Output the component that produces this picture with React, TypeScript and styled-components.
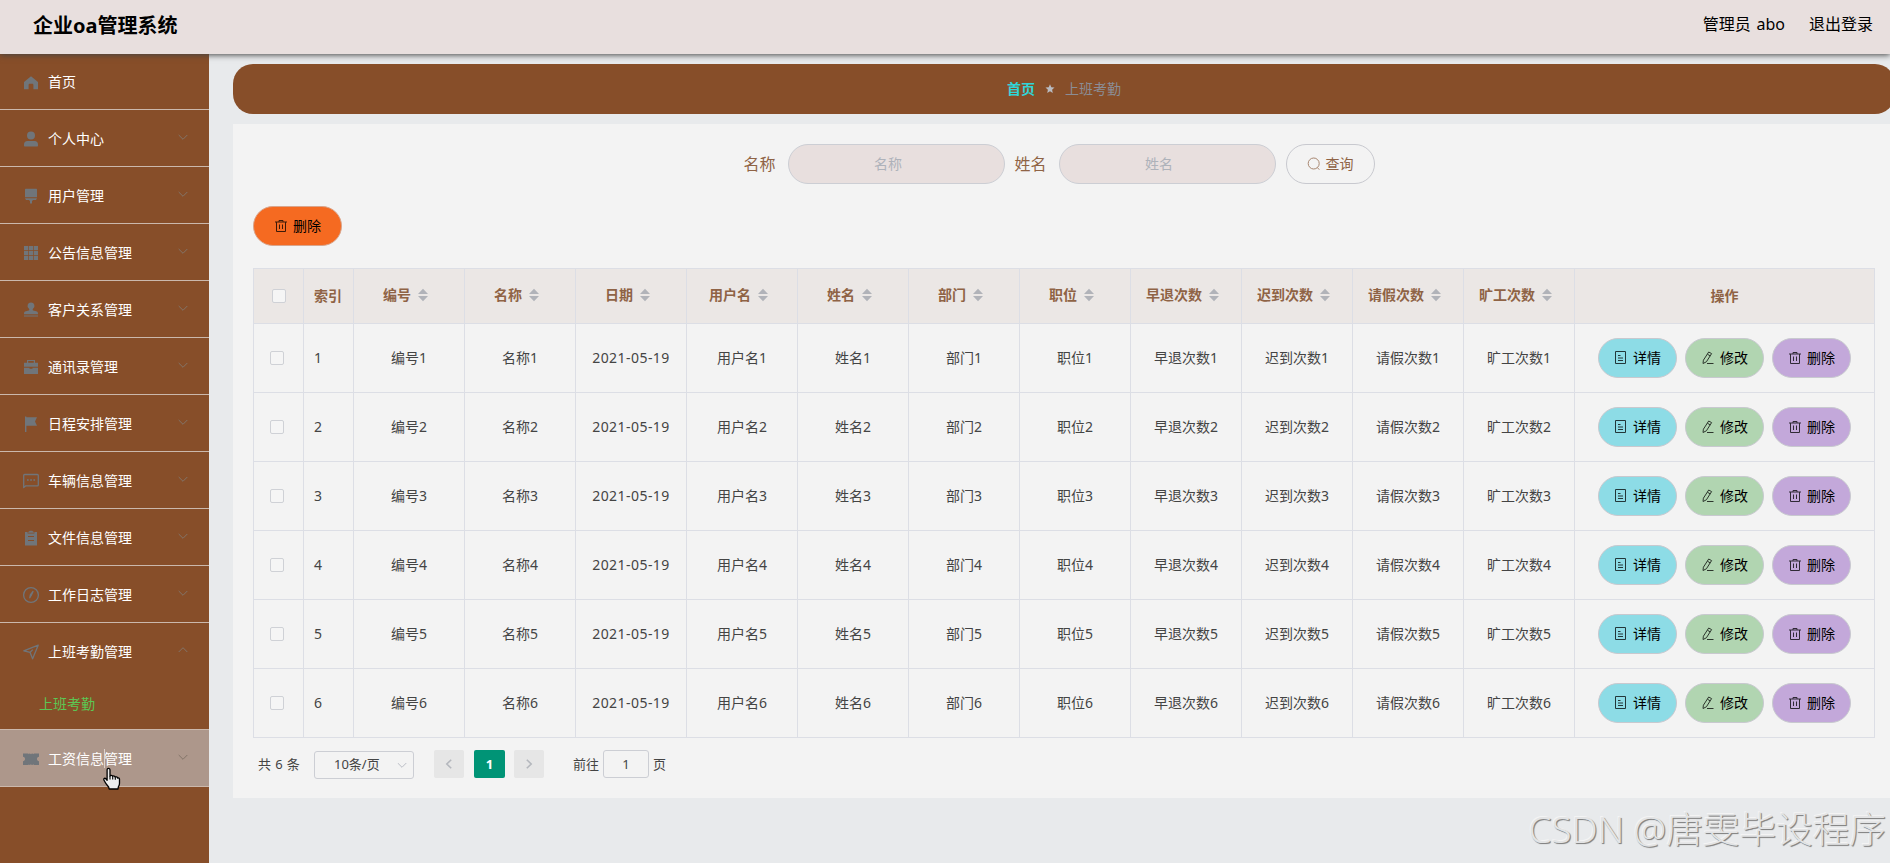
import React from 'react';
import styled, { createGlobalStyle, css } from 'styled-components';

const GlobalStyle = createGlobalStyle`
  * { box-sizing: border-box; }
  html, body { margin: 0; padding: 0; overflow: hidden; }
  body {
    font-family: "Noto Sans", "Noto Sans CJK SC", sans-serif;
    font-size: 14px;
    color: #333;
    background: #e8eaec;
  }
`;

const Page = styled.div`
  position: relative;
  display: flex;
  flex-direction: column;
  width: 1890px;
  height: 863px;
  overflow: hidden;
  background: #e8eaec;
`;

const Header = styled.header`
  position: relative;
  z-index: 2;
  flex: none;
  display: flex;
  justify-content: space-between;
  height: 54px;
  padding: 0 17px 0 33px;
  background: #e8dfde;
  color: #000;
  box-shadow: 0 1px 6px #444;
`;

const Title = styled.h1`
  margin: 0;
  font-size: 20px;
  font-weight: 700;
  line-height: 52px;
`;

const UserNav = styled.nav`
  display: flex;
  gap: 24px;
  font-size: 16px;
  line-height: 49px;
  word-spacing: 1.5px;
`;

const Body = styled.div`
  flex: 1;
  display: flex;
  min-height: 0;
`;

const Sidebar = styled.aside`
  flex: none;
  width: 209px;
  background: #874e29;
`;

const MenuItem = styled.div<{ $first?: boolean; $hover?: boolean; $open?: boolean }>`
  display: flex;
  align-items: center;
  height: ${p => (p.$first ? 56 : 57)}px;
  padding: 0 20px 0 22px;
  border-bottom: 1px solid ${p => (p.$open ? 'transparent' : '#cbb8ac')};
  background: ${p => (p.$hover ? '#ad978b' : 'transparent')};
  color: #fff;
  line-height: 20px;

  > svg:first-child { flex: none; margin-right: 8px; margin-top: ${p => (p.$first ? 3 : 2)}px; color: #70757a; }
  > span { flex: 1; padding-top: ${p => (p.$first ? 0 : 2)}px; }
  > svg:last-child { margin-top: -2px; color: #837468; }
`;

const SubItem = styled.div`
  height: 50px;
  padding-left: 39px;
  border-bottom: 1px solid #cbb8ac;
  color: #5cc653;
  line-height: 47px;
`;

const Main = styled.main`
  flex: none;
  display: flex;
  flex-direction: column;
  align-items: stretch;
  width: 1662px;
  margin-left: 24px;
  padding-top: 10px;
`;

const Crumbs = styled.div`
  display: flex;
  align-items: center;
  justify-content: center;
  height: 50px;
  padding-bottom: 2px;
  border-radius: 20px;
  background: #874e29;
  color: #8b8d95;

  strong { color: #30d5d8; }
  svg { margin: 2px 10px 0; color: #b9bbc1; }
`;

const Card = styled.section`
  height: 674px;
  margin-top: 10px;
  padding: 20px;
  background: #f3f3f3;
`;

const SearchForm = styled.form`
  display: flex;
  justify-content: center;
  align-items: center;
  height: 40px;
  padding-right: 10px;
`;

const FieldLabel = styled.label`
  margin-right: 12px;
  color: #8f6345;
  font-size: 16px;
  line-height: 40px;
`;

const FieldInput = styled.input`
  width: 217px;
  height: 40px;
  margin: 0 10px 0 0;
  padding: 0 31px 2px 15px;
  border: 1px solid #ccced4;
  border-radius: 20px;
  background: #e8dfde;
  font: inherit;
  text-align: center;
  outline: none;
  &::placeholder { color: #aeb2ba; opacity: 1; }
`;

const tones = {
  plain: '#f3f3f3',
  danger: '#f56a21',
  info: '#8ddce6',
  edit: '#b1d5b1',
  remove: '#c3a8da',
};

const PillButton = styled.button<{ $tone: keyof typeof tones; $wide?: boolean }>`
  display: inline-flex;
  align-items: center;
  justify-content: center;
  gap: 5px;
  width: ${p => (p.$wide ? 89 : 79)}px;
  height: 40px;
  padding: 0;
  border: 1px solid ${p => (p.$tone === 'danger' ? '#d9a58c' : '#c8c9cf')};
  border-radius: 20px;
  background: ${p => tones[p.$tone]};
  color: ${p => (p.$tone === 'plain' ? '#8f6345' : '#000')};
  font: inherit;
  line-height: 20px;
  svg { opacity: 0.75; }
`;

const Toolbar = styled.div`
  display: flex;
  margin: 22px 0;
`;

const Table = styled.table`
  width: 1622px;
  table-layout: fixed;
  border-collapse: separate;
  border-spacing: 0;
  border-top: 1px solid #dcdee5;
  border-left: 1px solid #dcdee5;
`;

const cell = css<{ $left?: boolean }>`
  padding: 0 ${p => (p.$left ? 10 : 0)}px;
  border-right: 1px solid #dcdee5;
  border-bottom: 1px solid #dcdee5;
  text-align: ${p => (p.$left ? 'left' : 'center')};
  line-height: 20px;
  white-space: nowrap;
  vertical-align: middle;
`;

const Th = styled.th<{ $left?: boolean }>`
  ${cell}
  height: 55px;
  background: #ebe7e5;
  color: #8f6345;
  font-weight: 700;
`;

const Td = styled.td<{ $left?: boolean }>`
  ${cell}
  height: 69px;
  color: #444;
`;

const DateText = styled.span`
  letter-spacing: 0.45px;
`;

const SortLabel = styled.span`
  display: inline-flex;
  align-items: center;
  padding-bottom: 2px;
  vertical-align: middle;
  svg { margin: 0 7px; color: #b1b3b9; }
`;

const CheckBox = styled.span<{ $head?: boolean }>`
  display: block;
  width: 14px;
  height: 14px;
  margin-left: ${p => (p.$head ? 18 : 16)}px;
  border: 1px solid #cfd1d6;
  border-radius: 2px;
  background: #f5f5f5;
`;

const Actions = styled.div`
  display: flex;
  justify-content: center;
  gap: 8px;
`;

const Pagination = styled.div`
  display: flex;
  align-items: center;
  height: 28px;
  margin-top: 12px;
  padding-left: 5px;
  font-size: 13px;
  line-height: 28px;
  color: #444;
`;

const Total = styled.span`
  width: 56px;
  word-spacing: 0.8px;
`;

const SizeSelect = styled.div`
  display: flex;
  align-items: center;
  justify-content: space-between;
  width: 100px;
  height: 28px;
  margin: 2px 20px 0 0;
  padding: 0 5px 0 19px;
  border: 1px solid #ccced4;
  border-radius: 3px;
  line-height: 24px;
  svg { color: #bbbec6; }
`;

const SizeText = styled.span`
  margin-top: -2px;
`;

const PageButton = styled.button<{ $active?: boolean }>`
  display: flex;
  align-items: center;
  justify-content: center;
  width: ${p => (p.$active ? 31 : 30)}px;
  height: 28px;
  margin-right: ${p => (p.$active ? 9 : 10)}px;
  padding: 0;
  border: 0;
  border-radius: 2px;
  background: ${p => (p.$active ? '#009476' : '#e6e6e6')};
  color: ${p => (p.$active ? '#fff' : '#b4b7bd')};
  font: inherit;
  font-weight: 700;
`;

const JumpInput = styled.input`
  width: 46px;
  height: 28px;
  margin: 0 4px;
  padding: 0;
  border: 1px solid #ccced4;
  border-radius: 3px;
  background: transparent;
  color: #444;
  font: inherit;
  text-align: center;
`;

const Jump = styled.label`
  display: flex;
  align-items: center;
  margin-left: 19px;
`;

const Watermark = styled.div`
  position: absolute;
  right: 4px;
  bottom: 9px;
  color: #e3e4e5;
  font-family: "Noto Sans", "Noto Sans CJK SC", sans-serif;
  font-weight: 300;
  font-size: 36.7px;
  line-height: 50px;
  letter-spacing: -0.05px;
  white-space: nowrap;
  text-shadow: 1px 1px 1px #808080, 1px 1px 0 #b0b0b0, -1px -1px 0 #f4f4f4;
`;

const Cursor = styled.svg`
  position: absolute;
  left: 102px;
  top: 767px;
`;

const Caret = styled.i`
  position: absolute;
  left: 104px;
  top: 749px;
  width: 1px;
  height: 19px;
  background: #ddd2cb;
`;

const glyphs: Record<string, React.ReactNode> = {
  home: <path d="M9 2.2 16 8v7.3h-4.6v-4.2c0-.8-.6-1.3-1.3-1.3H7.9c-.8 0-1.3.5-1.3 1.3v4.2H2V8z" />,
  user: <path d="M9 1.6a4 4 0 1 1 0 8 4 4 0 0 1 0-8zM5.5 11h7c2.2 0 3.5 1.3 3.5 3.4v1.2c0 .6-.3 1-1 1H3c-.6 0-1-.4-1-1v-1.200c0-2.100 1.300-3.400 3.500-3.400z" />,
  board: <path d="M4 1.700h10c.6 0 1 .4 1 1V10.300H3V2.700c0-.6.400-1 1-1zM3 11.300h12l-1 1.700h-2.800L10 14v2.600H8V14l-1.200-1H4z" />,
  grid: <path d="M2 2h4.200v4H2zm4.900 0h4.200v4H6.900zm4.900 0H16v4h-4.200zM2 6.800h4.200v4.100H2zm4.900 0h4.200v4.100H6.900zm4.900 0H16v4.100h-4.200zM2 11.700h4.200v4.200H2zm4.900 0h4.200v4.200H6.900zm4.900 0H16v4.200h-4.200z" />,
  stamp: <path d="M9 1.500a3.400 3.400 0 0 1 2 6.200c-.5.500-.4 1.400.2 1.900l3 .6c1.200.2 1.800 1 1.800 2.300v.8H2v-.8c0-1.300.6-2.100 1.800-2.300l3-.6c.6-.5.7-1.400.2-1.900A3.400 3.400 0 0 1 9 1.500zM2 14.400h14v1.100H2z" />,
  brief: <path fillRule="evenodd" d="M5 4.800V2h8v2.800h3v4H2v-4zm1.200 0h5.600V3.100H6.200zM2 9.800h5.500v.9h3v-.9H16V16H2z" />,
  flag: <path d="M3 1.500h1.400v.7H15l-2 4.300 2 4.300H4.400V17H3z" />,
  clip: <path fillRule="evenodd" d="M3 3h2.600v1.500h6.800V3H15v13.600H3zm3 4v1h6V7zm0 4v1h6v-1zM6.200 3c.5-.4 1-.4 1.500-1.200h2.600c.5.800 1 .8 1.500 1.200v.7H6.200z" />,
  ticket: <path d="M1 3.500h5.300l.5.700.6-.7h.4l.6.700.5-.7h.400l.5.700.6-.7h.4l.600.7.5-.7H17v3.300c-1.500.2-2 1.300-2 2.200s.5 2 2 2.200V15H12l-.5-.7-.6.700h-.4l-.6-.7-.5.700H9l-.5-.7-.6.700h-.4l-.6-.7-.5.700H1v-3.800c1.500-.2 2-1.300 2-2.200s-.5-2-2-2.200z" />,
};

const strokes: Record<string, React.ReactNode> = {
  chat: (
    <>
      <path d="M2.600 2.500h12.800c.5 0 .9.400.9.900v9.500c0 .5-.4.900-.9.900H3.800L1.700 15.600V3.400c0-.5.400-.9.900-.9z" />
      <path d="M5 8h1.700M8.200 8h1.700M11.400 8h1.700" strokeWidth="1.600" />
    </>
  ),
  gauge: (
    <>
      <circle cx="9" cy="9" r="7.400" />
      <path d="M11 5.500 9.300 9.200 7.800 11.800 8.300 9z" fill="currentColor" />
    </>
  ),
  plane: <path d="M16.200 2.200 1.800 7.800l6.300 1.600 2.500 6.400zM8.200 9.300l2.600-2.700" />,
};

const MenuIcon = ({ name }: { name: string }) =>
  glyphs[name] ? (
    <svg width="18" height="18" viewBox="0 0 18 18" fill="currentColor">{glyphs[name]}</svg>
  ) : (
    <svg width="18" height="18" viewBox="0 0 18 18" fill="none" stroke="currentColor" strokeWidth="1.300" strokeLinejoin="round">
      {strokes[name]}
    </svg>
  );

const Chevron = ({ up, size = 12 }: { up?: boolean; size?: number }) => (
  <svg width={size} height={size} viewBox="0 0 12 12" fill="none" stroke="currentColor" strokeWidth="1">
    <path d={up ? 'M1.700 8 6 3.700 10.300 8' : 'M1.700 4 6 8.300 10.300 4'} />
  </svg>
);

const Arrow = ({ right }: { right?: boolean }) => (
  <svg width="12" height="12" viewBox="0 0 12 12" fill="none" stroke="currentColor" strokeWidth="1.600">
    <path d={right ? 'M3.800 1.700 8.200 6 3.800 10.300' : 'M8.200 1.700 3.800 6 8.200 10.300'} />
  </svg>
);

const Line = ({ children }: { children: React.ReactNode }) => (
  <svg width="14" height="14" viewBox="0 0 14 14" fill="none" stroke="currentColor" strokeWidth="1">
    {children}
  </svg>
);

const TrashIcon = () => (
  <Line><path d="M1 3h12M5 3V1.500h4V3M2.500 3v9.500h9V3M5.500 5.500v4.500M8.500 5.500v4.500" /></Line>
);
const DetailIcon = () => (
  <Line><path d="M1.500.5h10v12h-10zM4 4.500h2.500M4 7h5M4 9.500h5" /></Line>
);
const EditIcon = () => (
  <Line><path d="M7.700 1 10.600 2.600 5.400 10.800 2 12.500 2.400 9.200zM6.400 3.200l2.800 1.700M6 12.500h6.500" /></Line>
);
const SearchIcon = () => (
  <Line><circle cx="6.700" cy="6.500" r="5.500" /><path d="m10.300 10.500 2 2.200" /></Line>
);
const StarIcon = () => (
  <svg width="10" height="10" viewBox="0 0 10 10" fill="currentColor">
    <path d="m5 .3 1.300 3 3.200.3-2.400 2.100.7 3.300L5 7.300 2.200 9l.7-3.300L.5 3.600l3.200-.3z" />
  </svg>
);
const SortIcon = () => (
  <svg width="10" height="14" viewBox="0 0 10 14" fill="currentColor">
    <path d="M5 .8 10 6H0zM0 8h10L5 13.200z" />
  </svg>
);

const menu = [
  ['个人中心', 'user'],
  ['用户管理', 'board'],
  ['公告信息管理', 'grid'],
  ['客户关系管理', 'stamp'],
  ['通讯录管理', 'brief'],
  ['日程安排管理', 'flag'],
  ['车辆信息管理', 'chat'],
  ['文件信息管理', 'clip'],
  ['工作日志管理', 'gauge'],
];

const columns = ['编号', '名称', '日期', '用户名', '姓名', '部门', '职位', '早退次数', '迟到次数', '请假次数', '旷工次数'];
const rows = [1, 2, 3, 4, 5, 6];

export default function App() {
  return (
    <Page>
      <GlobalStyle />
      <Header>
        <Title>企业oa管理系统</Title>
        <UserNav>
          <span>管理员 abo</span>
          <span>退出登录</span>
        </UserNav>
      </Header>
      <Body>
        <Sidebar>
          <MenuItem $first><MenuIcon name="home" /><span>首页</span></MenuItem>
          {menu.map(([label, icon]) => (
            <MenuItem key={label}>
              <MenuIcon name={icon} />
              <span>{label}</span>
              <Chevron />
            </MenuItem>
          ))}
          <MenuItem $open>
            <MenuIcon name="plane" />
            <span>上班考勤管理</span>
            <Chevron up />
          </MenuItem>
          <SubItem>上班考勤</SubItem>
          <MenuItem $hover>
            <MenuIcon name="ticket" />
            <span>工资信息管理</span>
            <Chevron />
          </MenuItem>
        </Sidebar>
        <Main>
          <Crumbs>
            <strong>首页</strong>
            <StarIcon />
            <span>上班考勤</span>
          </Crumbs>
          <Card>
            <SearchForm>
              <FieldLabel>名称</FieldLabel>
              <FieldInput placeholder="名称" />
              <FieldLabel>姓名</FieldLabel>
              <FieldInput placeholder="姓名" />
              <PillButton type="button" $tone="plain" $wide><SearchIcon />查询</PillButton>
            </SearchForm>
            <Toolbar>
              <PillButton $tone="danger" $wide><TrashIcon />删除</PillButton>
            </Toolbar>
            <Table>
              <colgroup>
                <col style={{ width: 50 }} />
                <col style={{ width: 50 }} />
                {columns.map(c => <col key={c} style={{ width: 111 }} />)}
                <col style={{ width: 300 }} />
              </colgroup>
              <thead>
                <tr>
                  <Th><CheckBox $head /></Th>
                  <Th $left>索引</Th>
                  {columns.map(c => (
                    <Th key={c}><SortLabel>{c}<SortIcon /></SortLabel></Th>
                  ))}
                  <Th>操作</Th>
                </tr>
              </thead>
              <tbody>
                {rows.map(n => (
                  <tr key={n}>
                    <Td><CheckBox /></Td>
                    <Td $left>{n}</Td>
                    {columns.map(c => (
                      <Td key={c}>{c === '日期' ? <DateText>2021-05-19</DateText> : `${c}${n}`}</Td>
                    ))}
                    <Td>
                      <Actions>
                        <PillButton $tone="info"><DetailIcon />详情</PillButton>
                        <PillButton $tone="edit"><EditIcon />修改</PillButton>
                        <PillButton $tone="remove"><TrashIcon />删除</PillButton>
                      </Actions>
                    </Td>
                  </tr>
                ))}
              </tbody>
            </Table>
            <Pagination>
              <Total>共 6 条</Total>
              <SizeSelect><SizeText>10条/页</SizeText><Chevron /></SizeSelect>
              <PageButton><Arrow /></PageButton>
              <PageButton $active>1</PageButton>
              <PageButton><Arrow right /></PageButton>
              <Jump>前往<JumpInput defaultValue="1" />页</Jump>
            </Pagination>
          </Card>
        </Main>
      </Body>
      <Watermark>CSDN @唐雯毕设程序</Watermark>
      <Caret />
      <Cursor width="19" height="24" viewBox="0 0 19 24">
        <path
          d="M5.500 1.800c1-.9 2.500-.3 2.500 1.200V9c.5-.9 2.400-.8 2.700.4.800-.8 2.300-.4 2.500.7.900-.6 2.300-.2 2.500 1 1-.4 1.800.1 1.800 1.100v4c0 1.700-.6 2.600-1.200 3.900L16 22H7.200l-.6-2c-1.700-2-3.400-4.300-4.600-6.800-.8-1.600.6-2.400 1.700-1.600l1.400 1.600V3c0-.5.100-.9.400-1.200z"
          fill="#eee" stroke="#000" strokeWidth="1.300" strokeLinejoin="round"
        />
        <path d="M8 9v3.500M10.700 9.500v3M13.300 10.200v2.600" stroke="#000" strokeWidth="1.100" />
      </Cursor>
    </Page>
  );
}
